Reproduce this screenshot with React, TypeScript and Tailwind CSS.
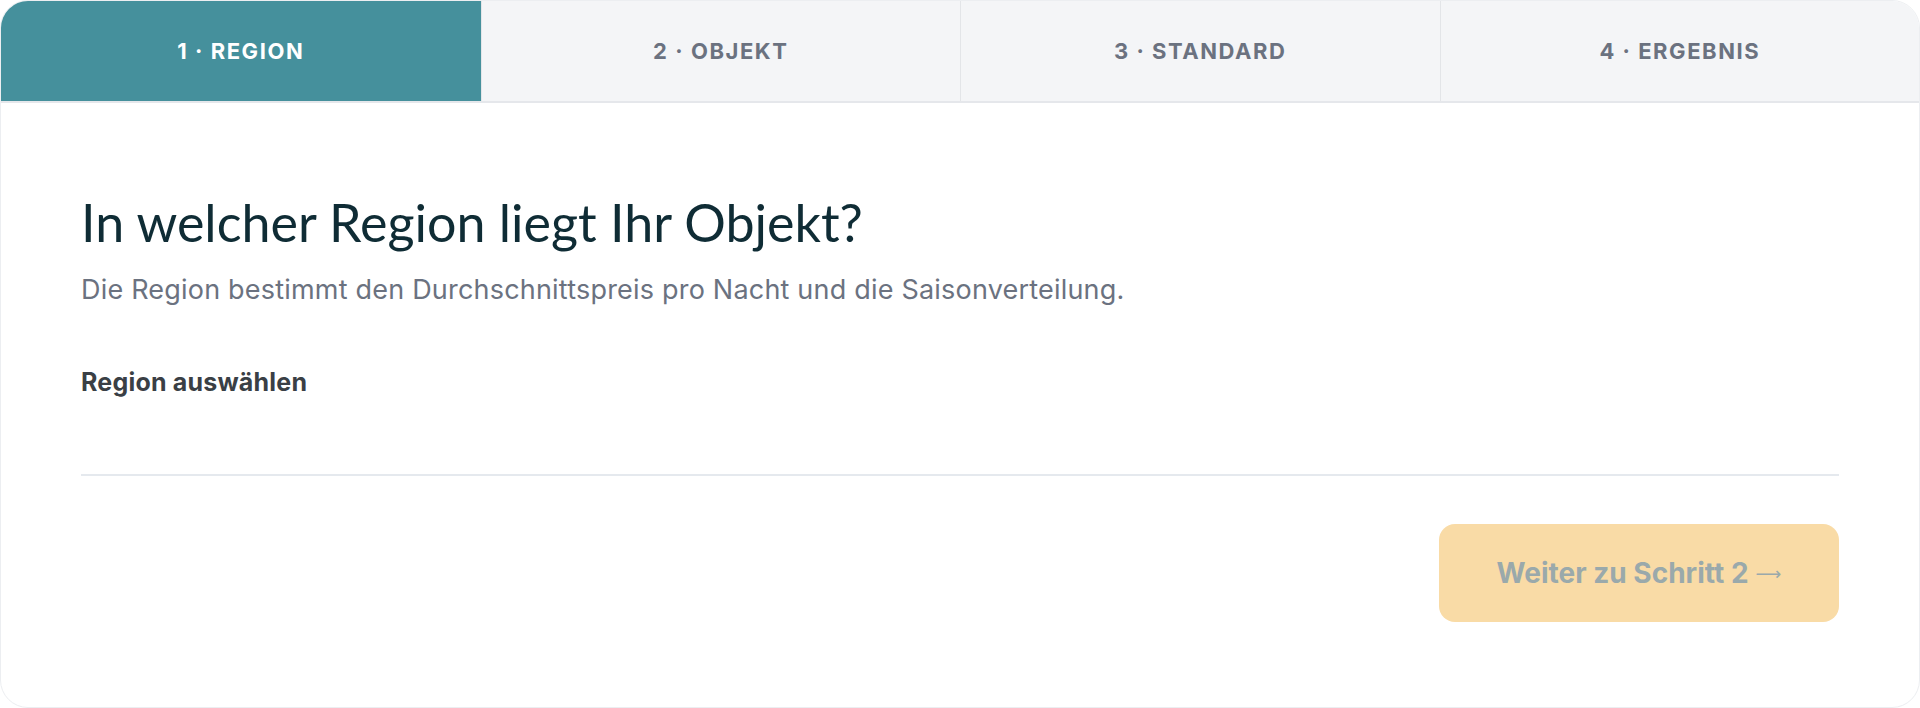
import React from "react";

const tabs = ["1 · REGION", "2 · OBJEKT", "3 · STANDARD", "4 · ERGEBNIS"];

export default function App() {
  return (
    <div className="min-h-[708px] w-full bg-white">
      <div className="flex h-[708px] w-full flex-col overflow-hidden rounded-[28px] border border-[#eceef1] bg-white">
        <div className="grid h-[102px] grid-cols-4 border-b-2 border-[#e5e7eb] bg-[#f4f5f7]">
          {tabs.map((t, i) => (
            <div
              key={t}
              className={
                i === 0
                  ? "flex items-center justify-center bg-[#45909c] text-white"
                  : "flex items-center justify-center border-l border-[#e3e5e8] text-[#6b7280]"
              }
            >
              <span className="font-['Inter',sans-serif] text-[22px] font-bold tracking-[0.07em]">{t}</span>
            </div>
          ))}
        </div>
        <div className="flex flex-col px-[80px] pt-[88px]">
          <h1 className="font-['Lato',sans-serif] text-[52px] font-normal leading-[62px] text-[#0f2c35]">
            In welcher Region liegt Ihr Objekt?
          </h1>
          <p className="mt-[19px] font-['Inter',sans-serif] text-[27px] leading-[36px] tracking-[0.2px] text-[#6b7280]">
            Die Region bestimmt den Durchschnittspreis pro Nacht und die Saisonverteilung.
          </p>
          <div className="mt-[58px] font-['Inter',sans-serif] text-[25px] font-bold leading-[32px] tracking-[0.2px] text-[#3a3f45]">
            Region auswählen
          </div>
          <div className="mt-[76px] h-[2px] w-full bg-[#e5e9ee]" />
          <div className="mt-[48px] flex justify-end">
            <button className="flex h-[98px] w-[400px] items-center justify-center rounded-[16px] bg-[#f9dba6] font-['Inter',sans-serif] text-[28px] font-bold leading-none text-[#9aa9ab]">
              <span>Weiter zu Schritt 2</span>
              <span className="ml-[7px] translate-y-[1px] font-['DejaVu_Sans',sans-serif] text-[18px] font-normal">⟶</span>
            </button>
          </div>
        </div>
      </div>
    </div>
  );
}
